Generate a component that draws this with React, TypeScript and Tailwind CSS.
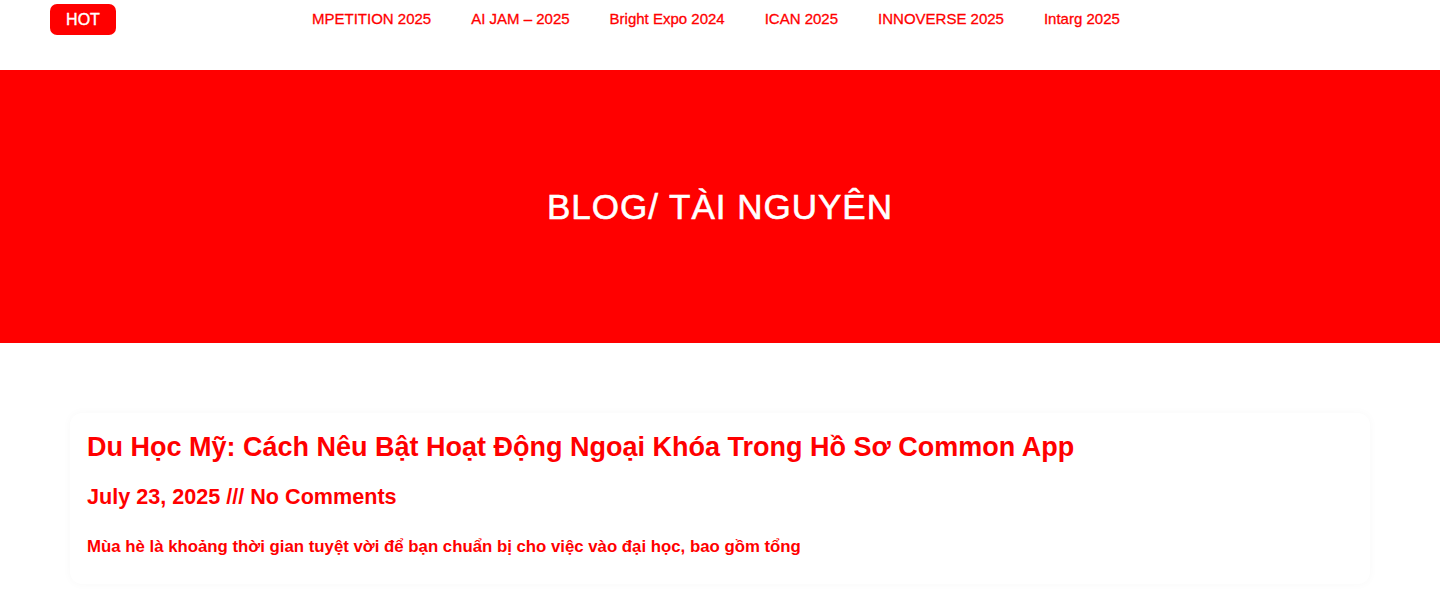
export default function App() {
  const nav = ["MPETITION 2025", "AI JAM – 2025", "Bright Expo 2024", "ICAN 2025", "INNOVERSE 2025", "Intarg 2025"];
  return (
    <div className="w-[1440px] min-h-[600px] bg-white text-[#ff0000]" style={{ fontFamily: '"Liberation Sans", Arial, sans-serif' }}>
      <header className="h-[70px] flex items-start">
        <div className="ml-[50px] mt-[4px] w-[66px] h-[31px] rounded-[7px] bg-[#ff0000] text-white text-[16px] leading-none flex items-center justify-center [-webkit-text-stroke:0.4px_white]">HOT</div>
        <nav className="ml-[196px] mt-[10px] flex gap-[40px] text-[15px] leading-[18px] [-webkit-text-stroke:0.3px_#ff0000]">
          {nav.map((n) => (
            <span key={n}>{n}</span>
          ))}
        </nav>
      </header>
      <section className="h-[273px] bg-[#ff0000] flex items-center justify-center">
        <h1 className="text-white text-[35px] tracking-[1px] leading-none [-webkit-text-stroke:0.6px_white]">BLOG/ TÀI NGUYÊN</h1>
      </section>
      <main className="pt-[70px] px-[70px]">
        <article className="rounded-[12px] bg-white shadow-[0_0_10px_rgba(0,0,0,0.03)] px-[17px] pt-[18px] pb-[26px]">
          <h2 className="text-[27px] font-bold leading-[32px]">Du Học Mỹ: Cách Nêu Bật Hoạt Động Ngoại Khóa Trong Hồ Sơ Common App</h2>
          <p className="mt-[21px] text-[21.6px] font-bold leading-[26px]">July 23, 2025 /// No Comments</p>
          <p className="mt-[26px] text-[16.8px] font-bold leading-[22px]">Mùa hè là khoảng thời gian tuyệt vời để bạn chuẩn bị cho việc vào đại học, bao gồm tổng</p>
        </article>
      </main>
    </div>
  );
}
